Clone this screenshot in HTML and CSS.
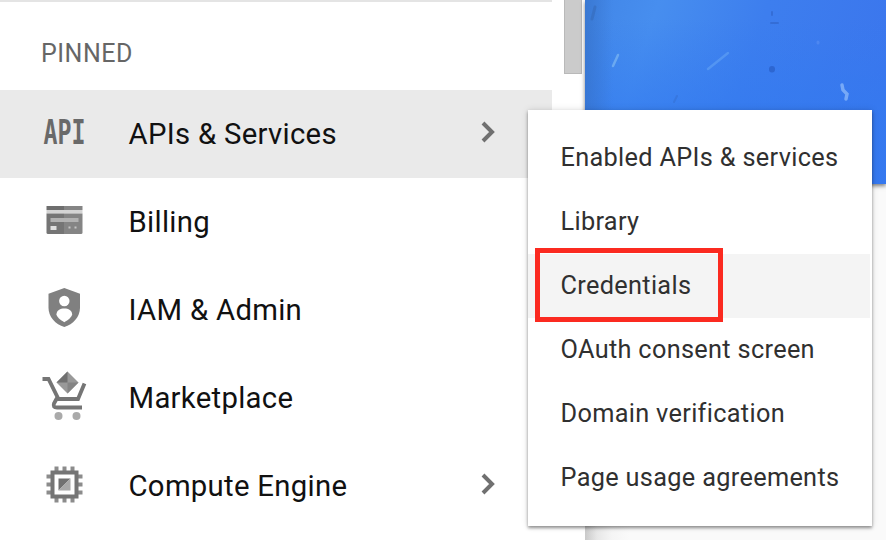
FILE: index.html
```html
<!DOCTYPE html>
<html lang="en">
<head>
<meta charset="utf-8">
<title>Cloud navigation</title>
<link rel="stylesheet" href="styles.css">
</head>
<body>
<div class="app">
  <nav class="sidebar">
    <div class="nav-list">
      <h2 class="section-title">PINNED</h2>
      <a class="nav-item active">
        <svg class="icon" viewBox="0 0 48 48"><text class="api" x="3.500" y="36" textLength="42" lengthAdjust="spacingAndGlyphs">API</text></svg>
        <span class="label">APIs &amp; Services</span>
        <svg class="chevron" viewBox="0 0 16 24"><path d="M3 3l9 9-9 9"/></svg>
      </a>
      <a class="nav-item">
        <svg class="icon" viewBox="0 0 48 48"><path fill="#6e6e6e" d="M6.500 10H24v4H6.500z"/><path fill="#858585" d="M24 10h18.500v4H24z"/><path fill="#d4d4d4" d="M6.500 14h36v3.500h-36z"/><path fill="#757575" d="M6.500 17.500H24V38H8a1.500 1.500 0 0 1-1.500-1.500z"/><path fill="#858585" d="M24 17.500h18.500v19A1.500 1.500 0 0 1 41 38H24z"/><path fill="#b2b2b2" d="M10.500 22h28v4h-28z"/><path fill="#e0e0e0" d="M10.500 30h6v4h-6z"/><path fill="#c5c5c5" d="M28.500 30.500h2v2h-2zM34.500 30.500h2v2h-2z"/></svg>
        <span class="label">Billing</span>
      </a>
      <a class="nav-item">
        <svg class="icon" viewBox="0 0 48 48"><path fill="#808080" d="M24.300 4L40 9.800v14C40 33 33 40.500 24.300 43 15.500 40.500 8.500 33 8.500 23.800v-14z"/><circle cx="24.300" cy="17" r="5.200" fill="#fff"/><path fill="#fff" d="M16.500 30.300c0-4 3.700-5.800 7.800-5.800s7.800 1.800 7.800 5.800c0 2.500-4 6-7.800 7.900-3.800-1.900-7.800-5.400-7.800-7.900z"/></svg>
        <span class="label">IAM &amp; Admin</span>
      </a>
      <a class="nav-item">
        <svg class="icon" viewBox="0 2 48 48"><path fill="none" stroke="#757575" stroke-width="3.800" d="M2.500 9h6l10 20h19.500L44.500 13.500"/><path fill="none" stroke="#757575" stroke-width="3.800" stroke-linejoin="round" d="M17 28l-3 5.500q-1.500 4 3 4h25"/><path fill="#999" d="M27.500 1.500l11 11-11 11-11-11z"/><path fill="#707070" d="M27.500 1.500v11h-11z"/><path fill="#858585" d="M27.500 12.500h11l-11 11z"/><circle cx="18.500" cy="46" r="4" fill="#aaa"/><circle cx="36.500" cy="46" r="4" fill="#aaa"/></svg>
        <span class="label">Marketplace</span>
      </a>
      <a class="nav-item">
        <svg class="icon" viewBox="0 -1 48 48"><path stroke="#8c8c8c" stroke-width="4" d="M16.500 5.500v5m8-5v5m8-5v5m-16 26v5m8-5v5m8-5v5M6.500 15.500h5m-5 8h5m-5 8h5m26-16h5m-5 8h5m-5 8h5"/><rect x="12.500" y="11.500" width="24" height="24" fill="#fff" stroke="#757575" stroke-width="4"/><path fill="#707070" d="M18.500 17.500h12l-12 12z"/><path fill="#a8a8a8" d="M30.500 17.500v12h-12z"/></svg>
        <span class="label">Compute Engine</span>
        <svg class="chevron" viewBox="0 0 16 24"><path d="M3 3l9 9-9 9"/></svg>
      </a>
    </div>
    <div class="scrollbar"></div>
  </nav>
  <main class="content">
    <svg class="hero" viewBox="0 0 301 184" preserveAspectRatio="none">
      <defs>
        <linearGradient id="sky" x1="0" y1="0.200" x2="1" y2="0.400"><stop offset="0" stop-color="#4287e8"/><stop offset=".2" stop-color="#478eef"/><stop offset=".55" stop-color="#3d7eee"/><stop offset="1" stop-color="#3b76ed"/></linearGradient>
        <linearGradient id="edge"><stop offset="0" stop-color="#356fc4" stop-opacity=".6"/><stop offset="1" stop-color="#356fc4" stop-opacity="0"/></linearGradient>
        <linearGradient id="low" x2="0" y2="1"><stop offset=".1" stop-color="#327af0" stop-opacity="0"/><stop offset=".6" stop-color="#327af0" stop-opacity=".6"/></linearGradient>
      </defs>
      <rect width="301" height="184" fill="url(#sky)"/>
      <rect width="301" height="184" fill="url(#low)"/>
      <rect width="28" height="184" fill="url(#edge)"/>
      <g fill="none" stroke-linecap="round" opacity=".75">
        <path stroke="#7ab5f3" stroke-width="2.500" d="M33 55l-5 11"/>
        <path stroke="#5b9cf4" stroke-width="2.500" d="M143 53l-20 16"/>
        <path stroke="#8db9fa" stroke-width="3.500" d="M257 85l1 5 4 4-1 5"/>
        <path stroke="#376fc1" stroke-width="3" d="M10 7L7 19"/>
        <path stroke="#3268cf" stroke-width="2" d="M187 12v3m-1 8h7"/>
        <path stroke="#295fc8" stroke-width="6" d="M187 69v.5"/>
        <path stroke="#548cf2" stroke-width="3" d="M233 42v1"/>
        <path stroke="#3674da" stroke-width="2" d="M92 96l-3 6"/>
      </g>
    </svg>
  </main>
</div>
<div class="submenu">
  <a class="sub-item"><span>Enabled APIs &amp; services</span></a>
  <a class="sub-item"><span>Library</span></a>
  <a class="sub-item hover"><span>Credentials</span></a>
  <a class="sub-item"><span>OAuth consent screen</span></a>
  <a class="sub-item"><span>Domain verification</span></a>
  <a class="sub-item"><span>Page usage agreements</span></a>
  <div class="highlight"></div>
</div>
</body>
</html>
```
FILE: styles.css
```css
* { box-sizing: border-box; }
body {
  margin: 0;
  width: 886px;
  height: 540px;
  overflow: hidden;
  position: relative;
  background: #fff;
  font-family: Roboto, sans-serif;
}
.app { display: flex; height: 540px; }
.sidebar {
  display: flex;
  flex: none;
  width: 585px;
  gap: 12px;
  background: #fff;
}
.nav-list { width: 552px; border-top: 2px solid #e4e4e4; }
.section-title {
  margin: 0;
  height: 88px;
  padding: 1px 0 0 41px;
  line-height: 102px;
  font-size: 25px;
  font-weight: 400;
  letter-spacing: .5px;
  color: #666;
}
.nav-item {
  display: flex;
  align-items: center;
  height: 88px;
  padding: 0 56px 0 40px;
  color: #111;
}
.nav-item.active { background: #eaeaea; }
.icon { width: 48px; height: 48px; flex: none; overflow: visible; margin-top: -5px; }
.api { font: 700 33px "DejaVu Sans Mono", monospace; fill: #696969; }
.label { flex: 1; margin-left: 40.500px; font-size: 29.300px; letter-spacing: .3px; }
.chevron { width: 16px; height: 24px; margin-top: -4px; fill: none; stroke: #707070; stroke-width: 4; }
.scrollbar { width: 18px; height: 74px; background: #cbcbcb; border: 1px solid #b9b9b9; border-top: 0; }
.content {
  flex: 1;
  background: linear-gradient(90deg, #c9c9c9, #e7e7e7 12px, #f5f5f5 27px, #fafafa 45px);
}
.hero { display: block; width: 100%; height: 184px; box-shadow: 0 2px 4px rgba(0, 0, 0, .5); }
.submenu {
  position: absolute;
  left: 528px;
  top: 110px;
  width: 344px;
  height: 416px;
  padding: 16px 0;
  background: #fff;
  box-shadow: 0 2px 3px rgba(0, 0, 0, .4), 0 0 7px rgba(0, 0, 0, .13);
}
.sub-item {
  display: flex;
  align-items: center;
  height: 64px;
  padding: 0 0 1px 32.500px;
  font-size: 25.300px;
  letter-spacing: .32px;
  color: #303030;
  white-space: nowrap;
}
.sub-item.hover { background: #f4f4f4; margin-right: 2px; }
.highlight {
  position: absolute;
  left: 7px;
  top: 138px;
  width: 188px;
  height: 74px;
  border: 5px solid #fb2a20;
}
```
